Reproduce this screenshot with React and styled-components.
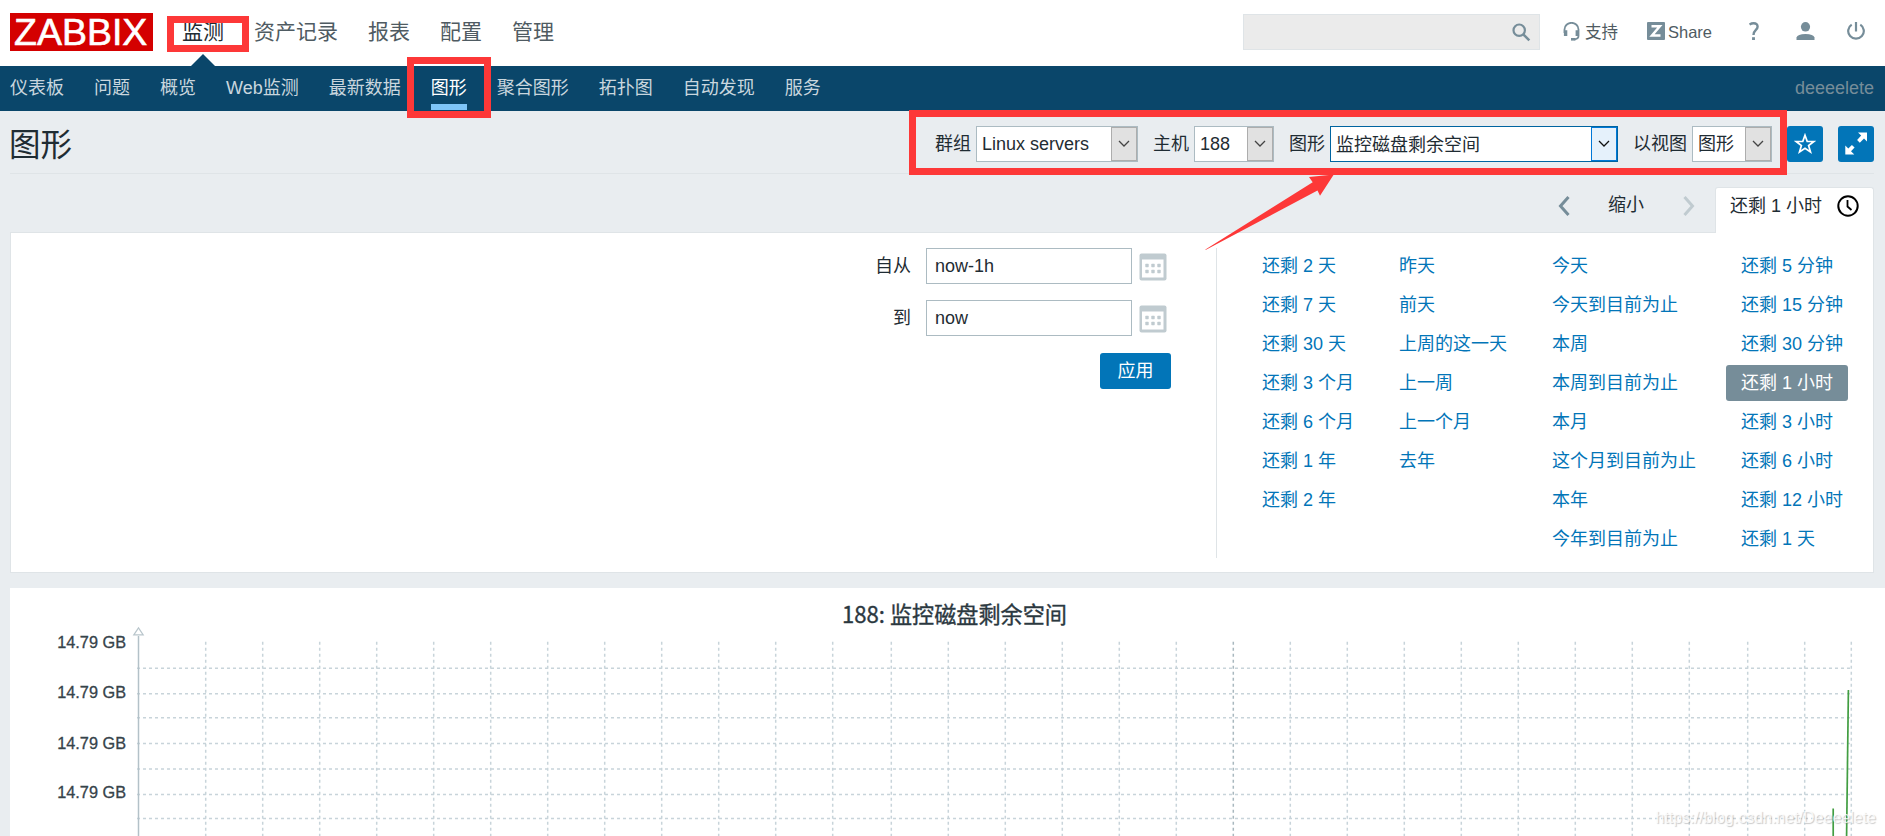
import React from "react";
import styled, { createGlobalStyle, css } from "styled-components";

const GlobalStyle = createGlobalStyle`
  * { box-sizing: border-box; }
  body {
    margin: 0;
    background: #e9edf0;
    color: #1f2c33;
    font: 18px/36px "Liberation Sans", "Noto Sans CJK SC", sans-serif;
    overflow: hidden;
  }
`;

const Page = styled.div`
  position: relative;
  height: 836px;
  overflow: hidden;
  white-space: nowrap;
`;

const TopBar = styled.header`
  display: flex;
  align-items: flex-start;
  height: 66px;
  padding: 13px 11px 0 10px;
  background: #fff;
`;

const Logo = styled.div`
  width: 143px;
  height: 38px;
  margin-right: 14px;
  padding-left: 4px;
  background: #d40000;
  color: #fff;
  font-size: 37.5px;
  line-height: 39px;
  -webkit-text-stroke: 0.6px #fff;
`;

const MainNav = styled.nav`
  display: flex;
  height: 53px;
`;

const MainLink = styled.a`
  position: relative;
  padding: 0 15px;
  font-size: 21px;
  line-height: 37px;
  color: ${(p) => (p.$active ? "#1f2c33" : "#4f5b62")};
  ${(p) =>
    p.$active &&
    css`
      &::after {
        content: "";
        position: absolute;
        left: 50%;
        bottom: 0;
        margin-left: -12px;
        border: 12px solid transparent;
        border-top: 0;
        border-bottom-color: #0a466a;
      }
    `}
`;

const Tools = styled.div`
  display: flex;
  align-items: center;
  height: 38px;
  margin-left: auto;
  color: #4f5b62;
  font-size: 16.5px;
`;

const SearchBox = styled.div`
  display: flex;
  align-items: center;
  justify-content: flex-end;
  width: 297px;
  height: 36px;
  padding-right: 8px;
  margin-right: 23px;
  background: #ebebeb;
  border: 1px solid #dfe4e7;
`;

const ToolLink = styled.a`
  display: flex;
  align-items: center;
  gap: ${(p) => p.$gap || 0}px;
  width: ${(p) => p.$w}px;
  svg { flex: none; margin-top: -2px; }
`;

const SubNav = styled.nav`
  display: flex;
  gap: 30px;
  height: 45px;
  padding: 0 11px 0 10px;
  background: #0a466a;
  line-height: 44px;
`;

const SubLink = styled.a`
  color: ${(p) => (p.$active ? "#fff" : "#c9d6de")};
  height: 44px;
  ${(p) => p.$active && css`border-bottom: 6px solid #7ec5f8;`}
`;

const UserName = styled.span`
  margin-left: auto;
  color: #768d99;
`;

const TitleBar = styled.div`
  display: flex;
  align-items: flex-start;
  height: 63px;
  margin: 0 11px 0 10px;
  padding-top: 15px;
  border-bottom: 1px solid #dfe4e7;
`;

const Title = styled.h1`
  margin: 0 auto 0 -1px;
  font-size: 31.5px;
  font-weight: 400;
  line-height: 38px;
`;

const Field = styled.label`
  display: flex;
  gap: 5px;
  margin-right: 15px;
`;

const Select = styled.span`
  display: flex;
  justify-content: space-between;
  width: ${(p) => p.$w}px;
  height: 36px;
  padding-left: 5px;
  line-height: ${(p) => (p.$focus ? 36 : 34)}px;
  background: #fff;
  border: 1px solid ${(p) => (p.$focus ? "#0064a0" : "#acbbc2")};
`;

const SelectButton = styled.i`
  display: flex;
  align-items: center;
  justify-content: center;
  width: 26px;
  height: 34px;
  background: ${(p) => (p.$focus ? "#e5f1fb" : "#e1e1e1")};
  border: 1px solid ${(p) => (p.$focus ? "#0078d7" : "#adadad")};
`;

const SquareButton = styled.button`
  display: flex;
  align-items: center;
  justify-content: center;
  width: 36px;
  height: 36px;
  margin-left: ${(p) => p.$ml || 0}px;
  padding: 0;
  border: 0;
  border-radius: 3px;
  background: #0275b8;
`;

const TimeTabs = styled.div`
  display: flex;
  justify-content: flex-end;
  align-items: flex-end;
  height: 58px;
  padding-right: 11px;
`;

const ZoomOut = styled.span`
  height: 36px;
  margin: 0 39px 9px 38px;
  line-height: 36px;
`;

const Chevron = styled.svg`
  margin-bottom: 16px;
`;

const ActiveTab = styled.div`
  position: relative;
  z-index: 1;
  display: flex;
  align-items: flex-start;
  width: 159px;
  height: 46px;
  margin: 0 0 -1px 20px;
  padding: 0 0 0 14px;
  gap: 15px;
  background: #fff;
  border: 1px solid #dfe4e7;
  border-bottom: 0;
  border-radius: 3px 3px 0 0;
  svg { margin-top: 7px; }
`;

const FilterPanel = styled.section`
  display: flex;
  height: 341px;
  margin: 0 11px 15px 10px;
  padding-top: 15px;
  background: #fff;
  border: 1px solid #dfe4e7;
`;

const RangeForm = styled.div`
  display: flex;
  flex-direction: column;
  align-items: flex-end;
  gap: 16px;
  width: 1206px;
  height: 310px;
  padding-right: 45px;
  border-right: 1px solid #dfe4e7;
`;

const RangeRow = styled.div`
  display: flex;
  gap: 15px;
  padding-right: 4px;
`;

const RangeInput = styled.div`
  width: 206px;
  height: 36px;
  padding-left: 8px;
  margin-right: -8px;
  line-height: 34px;
  border: 1px solid #acbbc2;
`;

const CalendarSlot = styled.span`
  display: flex;
  width: 28px;
  padding-top: 5px;
  align-items: flex-start;
`;

const Apply = styled.button`
  width: 71px;
  height: 36px;
  margin-top: 1px;
  padding: 0;
  border: 0;
  border-radius: 3px;
  background: #0275b8;
  color: #fff;
  font: inherit;
`;

const Presets = styled.div`
  display: grid;
  grid-template-columns: 137px 153px 189px 122px;
  padding-left: 30px;
`;

const PresetColumn = styled.div`
  display: flex;
  flex-direction: column;
  gap: 3px;
`;

const Preset = styled.a`
  height: 36px;
  padding: 0 15px;
  border-radius: 3px;
  color: ${(p) => (p.$selected ? "#fff" : "#0275b8")};
  background: ${(p) => (p.$selected ? "#768d99" : "transparent")};
`;

const GraphPanel = styled.section`
  height: 248px;
  margin-left: 10px;
  background: #fff;
  svg { display: block; }
`;

const Highlight = styled.div`
  position: absolute;
  z-index: 2;
  left: ${(p) => p.$x}px;
  top: ${(p) => p.$y}px;
  width: ${(p) => p.$w}px;
  height: ${(p) => p.$h}px;
  border: 7px solid #fd3838;
`;

const Pointer = styled.svg`
  position: absolute;
  z-index: 2;
  left: 1200px;
  top: 170px;
`;

const Watermark = styled.div`
  position: absolute;
  right: 9px;
  bottom: 6px;
  font: 16px/24px "Liberation Sans", sans-serif;
  color: rgba(255, 255, 255, 0.8);
  text-shadow: 1px 1px 1px rgba(120, 120, 120, 0.4);
`;

const Caret = ({ color }) => (
  <svg width="12" height="8" viewBox="0 0 12 8" fill="none" stroke={color} strokeWidth="1.3">
    <path d="M1 1l5 5 5-5" />
  </svg>
);

const Combo = ({ label, value, width, focus }) => (
  <Field>
    {label}
    <Select $w={width} $focus={focus}>
      {value}
      <SelectButton $focus={focus}><Caret color={focus ? "#111" : "#444"} /></SelectButton>
    </Select>
  </Field>
);

const Calendar = () => (
  <svg width="28" height="28" viewBox="0 0 28 28">
    <rect x="0.5" y="0.5" width="27" height="27" rx="2" fill="#c0cbd0" />
    <rect x="3" y="6.5" width="21.5" height="18" fill="#fff" />
    {[8, 14, 20].map((x) =>
      [12.5, 18.5].map((y) => (
        <rect key={`${x}-${y}`} x={x - 1.7} y={y - 1.7} width="3.4" height="3.4" rx="0.6" fill="#c0cbd0" />
      ))
    )}
  </svg>
);

const mainItems = ["监测", "资产记录", "报表", "配置", "管理"];
const subItems = ["仪表板", "问题", "概览", "Web监测", "最新数据", "图形", "聚合图形", "拓扑图", "自动发现", "服务"];
const presets = [
  ["还剩 2 天", "还剩 7 天", "还剩 30 天", "还剩 3 个月", "还剩 6 个月", "还剩 1 年", "还剩 2 年"],
  ["昨天", "前天", "上周的这一天", "上一周", "上一个月", "去年"],
  ["今天", "今天到目前为止", "本周", "本周到目前为止", "本月", "这个月到目前为止", "本年", "今年到目前为止"],
  ["还剩 5 分钟", "还剩 15 分钟", "还剩 30 分钟", "还剩 1 小时", "还剩 3 小时", "还剩 6 小时", "还剩 12 小时", "还剩 1 天"],
];

const gridX = [
  ...Array.from({ length: 12 }, (_, i) => 205.7 + 57 * i),
  ...Array.from({ length: 15 }, (_, i) => 891.3 + 57 * i),
  1747.7, 1804.7, 1851.3,
];
const gridY = [668.3, 693.7, 717.7, 743.4, 769, 794.5, 818.4];
const axisLabels = [647.7, 697.5, 748.5, 798];

const Graph = () => (
  <svg width="1875" height="248" viewBox="10 588 1875 248">
    <text x="842" y="622.5" fontSize="22.2" fontFamily='"Noto Sans CJK SC", sans-serif' fill="#2b383f" stroke="#2b383f" strokeWidth="0.35" textLength="225" lengthAdjust="spacingAndGlyphs">
      188: 监控磁盘剩余空间
    </text>
    <g stroke="#c8d4da" strokeWidth="1.5" strokeDasharray="3 3">
      {gridY.map((y) => <line key={y} x1="137" x2="1852" y1={y} y2={y} />)}
      {gridX.map((x) => (
        <line key={x} x1={x} x2={x} y1="641.8" y2="836" stroke={Math.abs(x - 1233.3) < 1 ? "#a9b8bf" : undefined} />
      ))}
    </g>
    <path d="M138.5 636V836" stroke="#b3c1c8" strokeWidth="1.5" />
    <path d="M133.8 634.8L138.5 627.8L143.2 634.8Z" fill="#fff" stroke="#b9c6cc" strokeWidth="1.2" />
    <g fontSize="16.3" fontFamily='"Liberation Sans", sans-serif' fill="#36434a" stroke="#36434a" strokeWidth="0.3">
      {axisLabels.map((y) => <text key={y} x="126" y={y} textAnchor="end">14.79 GB</text>)}
    </g>
    <g fill="none" stroke="#429e42" strokeWidth="1.7">
      <path d="M1848.4 690L1846.6 836" />
      <path d="M1833.2 808.5V836" />
    </g>
  </svg>
);

export default function App() {
  return (
    <Page>
      <GlobalStyle />
      <TopBar>
        <Logo>ZABBIX</Logo>
        <MainNav>
          {mainItems.map((t, i) => <MainLink key={t} $active={i === 0}>{t}</MainLink>)}
        </MainNav>
        <Tools>
          <SearchBox>
            <svg width="19" height="19" viewBox="0 0 19 19" fill="none" stroke="#768d99" strokeWidth="2.2">
              <circle cx="7.2" cy="7.2" r="5.7" />
              <path d="M11.3 11.3l6 6" strokeWidth="2.6" />
            </svg>
          </SearchBox>
          <ToolLink $w={84} $gap={5}>
            <svg width="17" height="19" viewBox="0 0 17 19" fill="none" stroke="#768d99" strokeWidth="1.8">
              <path d="M1.5 11V7.5a6.8 6.5 0 0 1 14 0V14q0 3-4.500 3.300" />
              <path d="M2.600 8.300v5.700M14.300 8.300v5.700" strokeWidth="3.400" />
              <path d="M8 17.300h4.500" strokeWidth="2.600" />
            </svg>
            支持
          </ToolLink>
          <ToolLink $w={102} $gap={3}>
            <svg width="18" height="18" viewBox="0 0 18 18">
              <rect width="18" height="18" rx="1" fill="#768d99" />
              <path d="M4.500 4.300h8.300L5 13.500H13.500" fill="none" stroke="#fff" strokeWidth="2.500" />
            </svg>
            Share
          </ToolLink>
          <ToolLink $w={47}>
            <svg width="10" height="18" viewBox="0 0 10 18" fill="none" stroke="#768d99" strokeWidth="2.400">
              <path d="M0.500 2.500C2 1.500 3 1.200 4.700 1.200c2.500 0 3.900 1.400 3.900 3.500C8.600 8 4.500 8 4.500 13" />
              <path d="M4.500 15.200v2.800" strokeWidth="2.900" />
            </svg>
          </ToolLink>
          <ToolLink $w={51}>
            <svg width="19" height="18" viewBox="0 0 19 18" fill="#768d99">
              <ellipse cx="9.500" cy="4.800" rx="4.600" ry="4.800" />
              <path d="M0.500 18v-2.500q1-3.500 9-3.500t9 3.500V18z" />
            </svg>
          </ToolLink>
          <ToolLink $w={27}>
            <svg width="18" height="18" viewBox="0 0 18 18" fill="none" stroke="#768d99" strokeWidth="2.200">
              <path d="M9 0v9.500" />
              <path d="M4.700 2.700a7.800 7.600 0 1 0 8.600 0" />
            </svg>
          </ToolLink>
        </Tools>
      </TopBar>
      <SubNav>
        {subItems.map((t) => <SubLink key={t} $active={t === "图形"}>{t}</SubLink>)}
        <UserName>deeeelete</UserName>
      </SubNav>
      <TitleBar>
        <Title>图形</Title>
        <Combo label="群组" value="Linux servers" width={162} />
        <Combo label="主机" value="188" width={80} />
        <Combo label="图形" value="监控磁盘剩余空间" width={288} focus />
        <Combo label="以视图" value="图形" width={80} />
        <SquareButton>
          <svg width="22" height="22" viewBox="0 0 22 22" fill="none" stroke="#fff" strokeWidth="1.700">
            <path d="M11 2.200l2.200 6.100 6.600.2-5.200 4 1.900 6.400L11 15.200l-5.500 3.700 1.900-6.400-5.200-4 6.600-.2z" />
          </svg>
        </SquareButton>
        <SquareButton $ml={15}>
          <svg width="24" height="24" viewBox="0 0 24 24" fill="#fff">
            <path d="M14 0.500h9v9l-3-3-4.200 4.200-2.700-2.700L17.200 3.600z" />
            <path d="M1.300 13.500l3 3 3.600-3.500 2.700 2.600-3.600 3.600 3.300 3.300h-9z" />
          </svg>
        </SquareButton>
      </TitleBar>
      <TimeTabs>
        <Chevron width="12" height="20" viewBox="0 0 12 20" fill="none" stroke="#768d99" strokeWidth="3">
          <path d="M10.500 1L2.500 10l8 9" />
        </Chevron>
        <ZoomOut>缩小</ZoomOut>
        <Chevron width="12" height="20" viewBox="0 0 12 20" fill="none" stroke="#c0cbd0" strokeWidth="3">
          <path d="M1.500 1l8 9-8 9" />
        </Chevron>
        <ActiveTab>
          还剩 1 小时
          <svg width="22" height="22" viewBox="0 0 22 22" fill="none" stroke="#000" strokeWidth="2">
            <circle cx="11" cy="11" r="9.700" />
            <path d="M10.500 5v6.500l4 3.500" strokeWidth="1.800" />
          </svg>
        </ActiveTab>
      </TimeTabs>
      <FilterPanel>
        <RangeForm>
          <RangeRow>自从<RangeInput>now-1h</RangeInput><CalendarSlot><Calendar /></CalendarSlot></RangeRow>
          <RangeRow>到<RangeInput>now</RangeInput><CalendarSlot><Calendar /></CalendarSlot></RangeRow>
          <Apply>应用</Apply>
        </RangeForm>
        <Presets>
          {presets.map((col, i) => (
            <PresetColumn key={i}>
              {col.map((t) => <Preset key={t} $selected={t === "还剩 1 小时"}>{t}</Preset>)}
            </PresetColumn>
          ))}
        </Presets>
      </FilterPanel>
      <GraphPanel><Graph /></GraphPanel>
      <Highlight $x={167} $y={16} $w={82} $h={36} />
      <Highlight $x={407} $y={57} $w={84} $h={61} />
      <Highlight $x={909} $y={110} $w={878} $h={65} />
      <Pointer width="140" height="85" viewBox="1200 170 140 85" fill="#fd3838">
        <path d="M1205 249.800L1312.700 182.300L1309 177L1333.800 174.500L1320 195.700L1317.500 190.500L1206 249.800Z" />
      </Pointer>
      <Watermark>https://blog.csdn.net/Deeeelete</Watermark>
    </Page>
  );
}
